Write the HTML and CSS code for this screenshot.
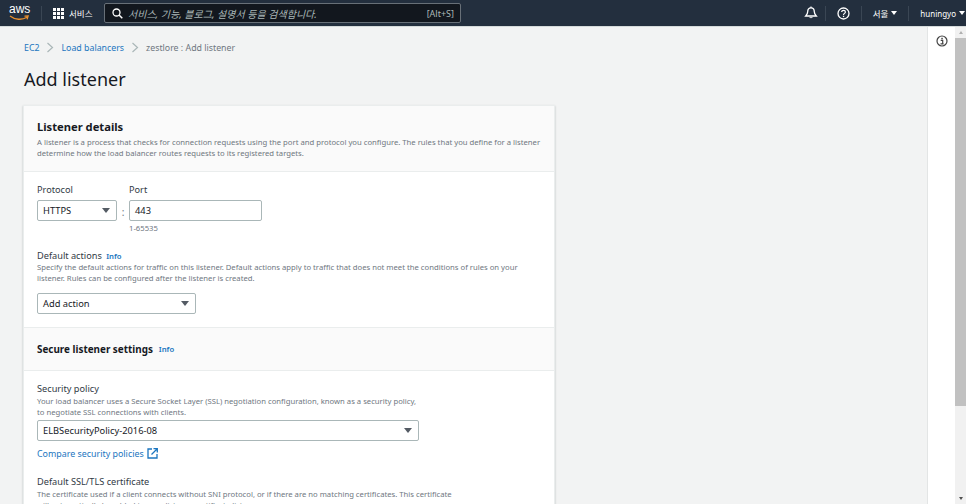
FILE: index.html
```html
<!DOCTYPE html>
<html lang="en">
<head>
  <meta charset="UTF-8" />
  <title>Add listener | EC2</title>
  <link rel="stylesheet" href="styles.css">
</head>
<body>

  <header class="topbar">
    <div class="logo">
      <span class="logo-word">aws</span>
      <svg class="logo-smile" width="21" height="6" viewBox="0 0 21 6"><path d="M1 1c5 4 12 4.200 17 1.300M15.500 1.200l3.600-.2-1 3.400" fill="none" stroke="#ec912d" stroke-width="1.300"/></svg>
    </div>
    <div class="sep sep-logo"></div>
    <svg class="grid-icon" width="11" height="11" viewBox="0 0 11 11" fill="#fff">
      <rect width="3" height="3"/><rect x="4" width="3" height="3"/><rect x="8" width="3" height="3"/>
      <rect y="4" width="3" height="3"/><rect x="4" y="4" width="3" height="3"/><rect x="8" y="4" width="3" height="3"/>
      <rect y="8" width="3" height="3"/><rect x="4" y="8" width="3" height="3"/><rect x="8" y="8" width="3" height="3"/>
    </svg>
    <span class="services">서비스</span>
    <div class="search">
      <svg width="11" height="11" viewBox="0 0 11 11"><circle cx="4.500" cy="4.500" r="3.500" fill="none" stroke="#fff" stroke-width="1.300"/><path d="M7 7l3.300 3.300" stroke="#fff" stroke-width="1.500"/></svg>
      <span class="search-hint">서비스, 기능, 블로그, 설명서 등을 검색합니다.</span>
      <span class="search-key">[Alt+S]</span>
    </div>
    <div class="top-right">
      <svg class="top-icon bell" width="14" height="14" viewBox="0 0 14 14"><path d="M7 1.800c-2.400 0-3.300 1.800-3.300 4 0 1.900-.9 3-2 4.200h10.600c-1.100-1.200-2-2.300-2-4.200 0-2.200-.9-4-3.300-4z" fill="none" stroke="#fff" stroke-width="1.300"/><path d="M5.300 11.300c.3 1.200 3.100 1.200 3.400 0z" fill="#fff"/><path d="M7 .5v1.500" stroke="#fff" stroke-width="1.200"/></svg>
      <div class="sep"></div>
      <svg class="top-icon" width="13" height="13" viewBox="0 0 13 13"><circle cx="6.500" cy="6.500" r="5.500" fill="none" stroke="#fff" stroke-width="1.300"/><path d="M4.700 5c0-2.300 3.700-2.300 3.700 0 0 1.400-1.900 1.400-1.900 3" fill="none" stroke="#fff" stroke-width="1.200"/><rect x="5.900" y="8.800" width="1.300" height="1.300" fill="#fff"/></svg>
      <div class="sep"></div>
      <span class="top-menu">서울<i class="caret"></i></span>
      <div class="sep"></div>
      <span class="top-menu user-menu">huningyo<i class="caret"></i></span>
    </div>
  </header>

  <div class="layout">
    <main class="content">
      <nav class="crumbs">
        <a href="#">EC2</a>
        <svg width="8" height="11" viewBox="0 0 8 11"><path d="M1.500 1l5 4.500-5 4.500" fill="none" stroke="#aab7b8" stroke-width="1.200"/></svg>
        <a href="#">Load balancers</a>
        <svg width="8" height="11" viewBox="0 0 8 11"><path d="M1.500 1l5 4.500-5 4.500" fill="none" stroke="#aab7b8" stroke-width="1.200"/></svg>
        <span>zestlore : Add listener</span>
      </nav>

      <h1>Add listener</h1>

      <section class="card">
        <div class="card-head">
          <h2>Listener details</h2>
          <p class="hint">A listener is a process that checks for connection requests using the port and protocol you configure. The rules that you define for a listener determine how the load balancer routes requests to its registered targets.</p>
        </div>

        <div class="card-body">
          <div class="proto-row">
            <div>
              <div class="label">Protocol</div>
              <div class="select select-proto">HTTPS<i class="arrow"></i></div>
            </div>
            <span class="colon">:</span>
            <div>
              <div class="label">Port</div>
              <div class="input">443</div>
              <div class="hint range">1-65535</div>
            </div>
          </div>

          <div class="label label-actions">Default actions <a class="info" href="#">Info</a></div>
          <p class="hint hint-actions">Specify the default actions for traffic on this listener. Default actions apply to traffic that does not meet the conditions of rules on your listener. Rules can be configured after the listener is created.</p>
          <div class="select select-action">Add action<i class="arrow"></i></div>
        </div>

        <div class="card-band">
          <h3>Secure listener settings</h3>
          <a class="info" href="#">Info</a>
        </div>

        <div class="card-body body-secure">
          <div class="label">Security policy</div>
          <p class="hint hint-policy">Your load balancer uses a Secure Socket Layer (SSL) negotiation configuration, known as a security policy, to negotiate SSL connections with clients.</p>
          <div class="select select-policy">ELBSecurityPolicy-2016-08<i class="arrow"></i></div>
          <a class="compare" href="#">Compare security policies
            <svg width="11" height="11" viewBox="0 0 11 11" fill="none" stroke="#1b76c0" stroke-width="1.300"><path d="M5 1H1v9h9V6"/><path d="M4.500 6.500L10 1M6.500 .7h3.800v3.800"/></svg>
          </a>
          <div class="label label-cert">Default SSL/TLS certificate</div>
          <p class="hint hint-policy2">The certificate used if a client connects without SNI protocol, or if there are no matching certificates. This certificate will automatically be added to your listener certificate list.</p>
        </div>
      </section>
    </main>

    <aside class="side">
      <svg width="12" height="12" viewBox="0 0 12 12"><circle cx="6" cy="6" r="5" fill="none" stroke="#444" stroke-width="1.200"/><rect x="5.300" y="2.800" width="1.500" height="1.500" fill="#444"/><path d="M4.700 5.300h2v3.200M4.500 8.800h3.100" fill="none" stroke="#444" stroke-width="1.200"/></svg>
    </aside>

    <div class="scrollbar">
      <i class="scroll-up"></i>
      <div class="thumb"></div>
      <i class="scroll-down"></i>
    </div>
  </div>

</body>
</html>
```

FILE: styles.css
```css
:root {
  --nav: #232f3e;
  --bg: #f2f3f3;
  --text: #16191f;
  --muted: #6f777f;
  --link: #1b76c0;
  --line: #eaeded;
  --field: #aab7b8;
}

html, body {
  height: 100%;
}

body {
  margin: 0;
  display: flex;
  flex-direction: column;
  overflow: hidden;
  background: var(--bg);
  color: var(--text);
  font-family: "Noto Sans", "Noto Sans CJK KR", sans-serif;
  font-size: 9px;
}

a {
  color: var(--link);
  text-decoration: none;
}

/* top bar */
.topbar {
  flex: none;
  height: 27px;
  display: flex;
  align-items: center;
  background: var(--nav);
  color: #fff;
  border-bottom: 1px solid #d5dbdb;
  box-sizing: border-box;
}

.logo {
  width: 21px;
  margin-left: 9px;
  height: 20px;
}

.logo-word {
  display: block;
  font-family: "Liberation Sans", sans-serif;
  font-size: 12px;
  line-height: 13px;
  text-align: center;
}

.logo-smile {
  display: block;
  margin-top: -1px;
}

.sep {
  width: 1px;
  height: 15px;
  background: #3a4654;
}

.sep-logo {
  margin: 0 11px;
}

.grid-icon {
  margin-right: 5px;
}

.services {
  font-size: 8.500px;
  width: 24px;
}

.search {
  width: 357px;
  height: 20px;
  margin-left: 11px;
  box-sizing: border-box;
  display: flex;
  align-items: center;
  padding: 0 6px 0 7px;
  background: #12171e;
  border: 1px solid #687078;
  border-radius: 2px;
}

.search-hint {
  flex: 1;
  margin-left: 5px;
  color: #aab7b8;
  font-style: italic;
  font-size: 10px;
}

.search-key {
  color: #aab7b8;
  font-size: 9px;
}

.top-right {
  margin-left: auto;
  display: flex;
  align-items: center;
  gap: 11px;
  padding-right: 1px;
}

.bell {
  margin-right: -4px;
}

.top-menu {
  display: flex;
  align-items: center;
  gap: 3px;
  font-size: 8.500px;
}

.user-menu {
  font-size: 8px;
}

.caret {
  width: 0;
  height: 0;
  border: 3px solid transparent;
  border-top: 4px solid #fff;
  border-bottom: 0;
}

/* main area */
.layout {
  flex: 1;
  display: flex;
  min-height: 0;
}

.content {
  flex: 1;
  padding: 13px 0 0 24px;
  overflow: hidden;
}

.crumbs {
  display: flex;
  align-items: center;
  gap: 7px;
  height: 15px;
  color: var(--muted);
  font-size: 8.800px;
}

h1 {
  margin: 12px 0 13px;
  font-size: 18px;
  font-weight: 400;
  line-height: 25px;
}

.card {
  width: 530px;
  margin-left: -1px;
  background: #fff;
  border: 1px solid var(--line);
  border-bottom: 0;
  box-shadow: 0 1px 2px rgba(0, 28, 36, 0.25);
}

.card-head {
  padding: 13px 13px 12px;
  background: #fafafa;
  border-bottom: 1px solid var(--line);
}

h2 {
  margin: 0 0 2px;
  font-size: 11.200px;
  line-height: 16px;
  font-weight: 700;
}

.hint {
  margin: 0;
  color: var(--muted);
  font-size: 7.700px;
  line-height: 11px;
}

.card-body {
  padding: 11px 13px 13px;
}

.proto-row {
  display: flex;
  align-items: flex-start;
}

.label {
  font-size: 9.200px;
  line-height: 14px;
  color: #313a45;
}

.select, .input {
  box-sizing: border-box;
  display: flex;
  align-items: center;
  justify-content: space-between;
  height: 21px;
  margin-top: 3px;
  padding: 0 6px 0 5px;
  background: #fff;
  border: 1px solid var(--field);
  border-radius: 2px;
  font-size: 9.300px;
  color: var(--text);
}

.select-proto {
  width: 80px;
}

.colon {
  width: 12px;
  padding-top: 22px;
  text-align: center;
  font-size: 10px;
  color: var(--muted);
}

.input {
  width: 133px;
}

.range {
  margin-top: 2px;
}

.label-actions {
  margin-top: 15px;
}

.info {
  margin-left: 2px;
  font-size: 7.700px;
  font-weight: 600;
}

.hint-actions {
  margin-top: -1px;
}

.select-action {
  width: 159px;
  margin-top: 9px;
}

.arrow {
  width: 0;
  height: 0;
  border: 4px solid transparent;
  border-top: 5px solid #545b64;
  border-bottom: 0;
}

.card-band {
  display: flex;
  align-items: center;
  gap: 4px;
  height: 42px;
  padding: 0 13px;
  background: #fafafa;
  border-top: 1px solid var(--line);
  border-bottom: 1px solid var(--line);
}

h3 {
  margin: 0;
  font-size: 9.900px;
  font-weight: 700;
}

.hint-policy {
  width: 382px;
}

.select-policy {
  width: 382px;
  margin-top: 2px;
}

.compare {
  display: flex;
  align-items: center;
  gap: 3px;
  margin-top: 6px;
  font-size: 8.900px;
  line-height: 13px;
}

.label-cert {
  margin-top: 15px;
}

.hint-policy2 {
  width: 425px;
}

/* right rail + scrollbar */
.side {
  flex: none;
  width: 27px;
  display: flex;
  justify-content: center;
  align-items: flex-start;
  padding-top: 8px;
  background: #fff;
  border-left: 1px solid #e3e5e5;
}

.scrollbar {
  flex: none;
  width: 11px;
  display: flex;
  flex-direction: column;
  align-items: center;
  background: #f1f1f1;
}

.scroll-up, .scroll-down {
  width: 0;
  height: 0;
  margin: 4px 0;
  border: 2.500px solid transparent;
}

.scroll-up {
  border-bottom: 3px solid #b0b0b0;
  border-top: 0;
}

.scroll-down {
  margin-top: auto;
  border-top: 3px solid #505050;
  border-bottom: 0;
}

.thumb {
  width: 100%;
  height: 368px;
  background: #c1c1c1;
}
```
